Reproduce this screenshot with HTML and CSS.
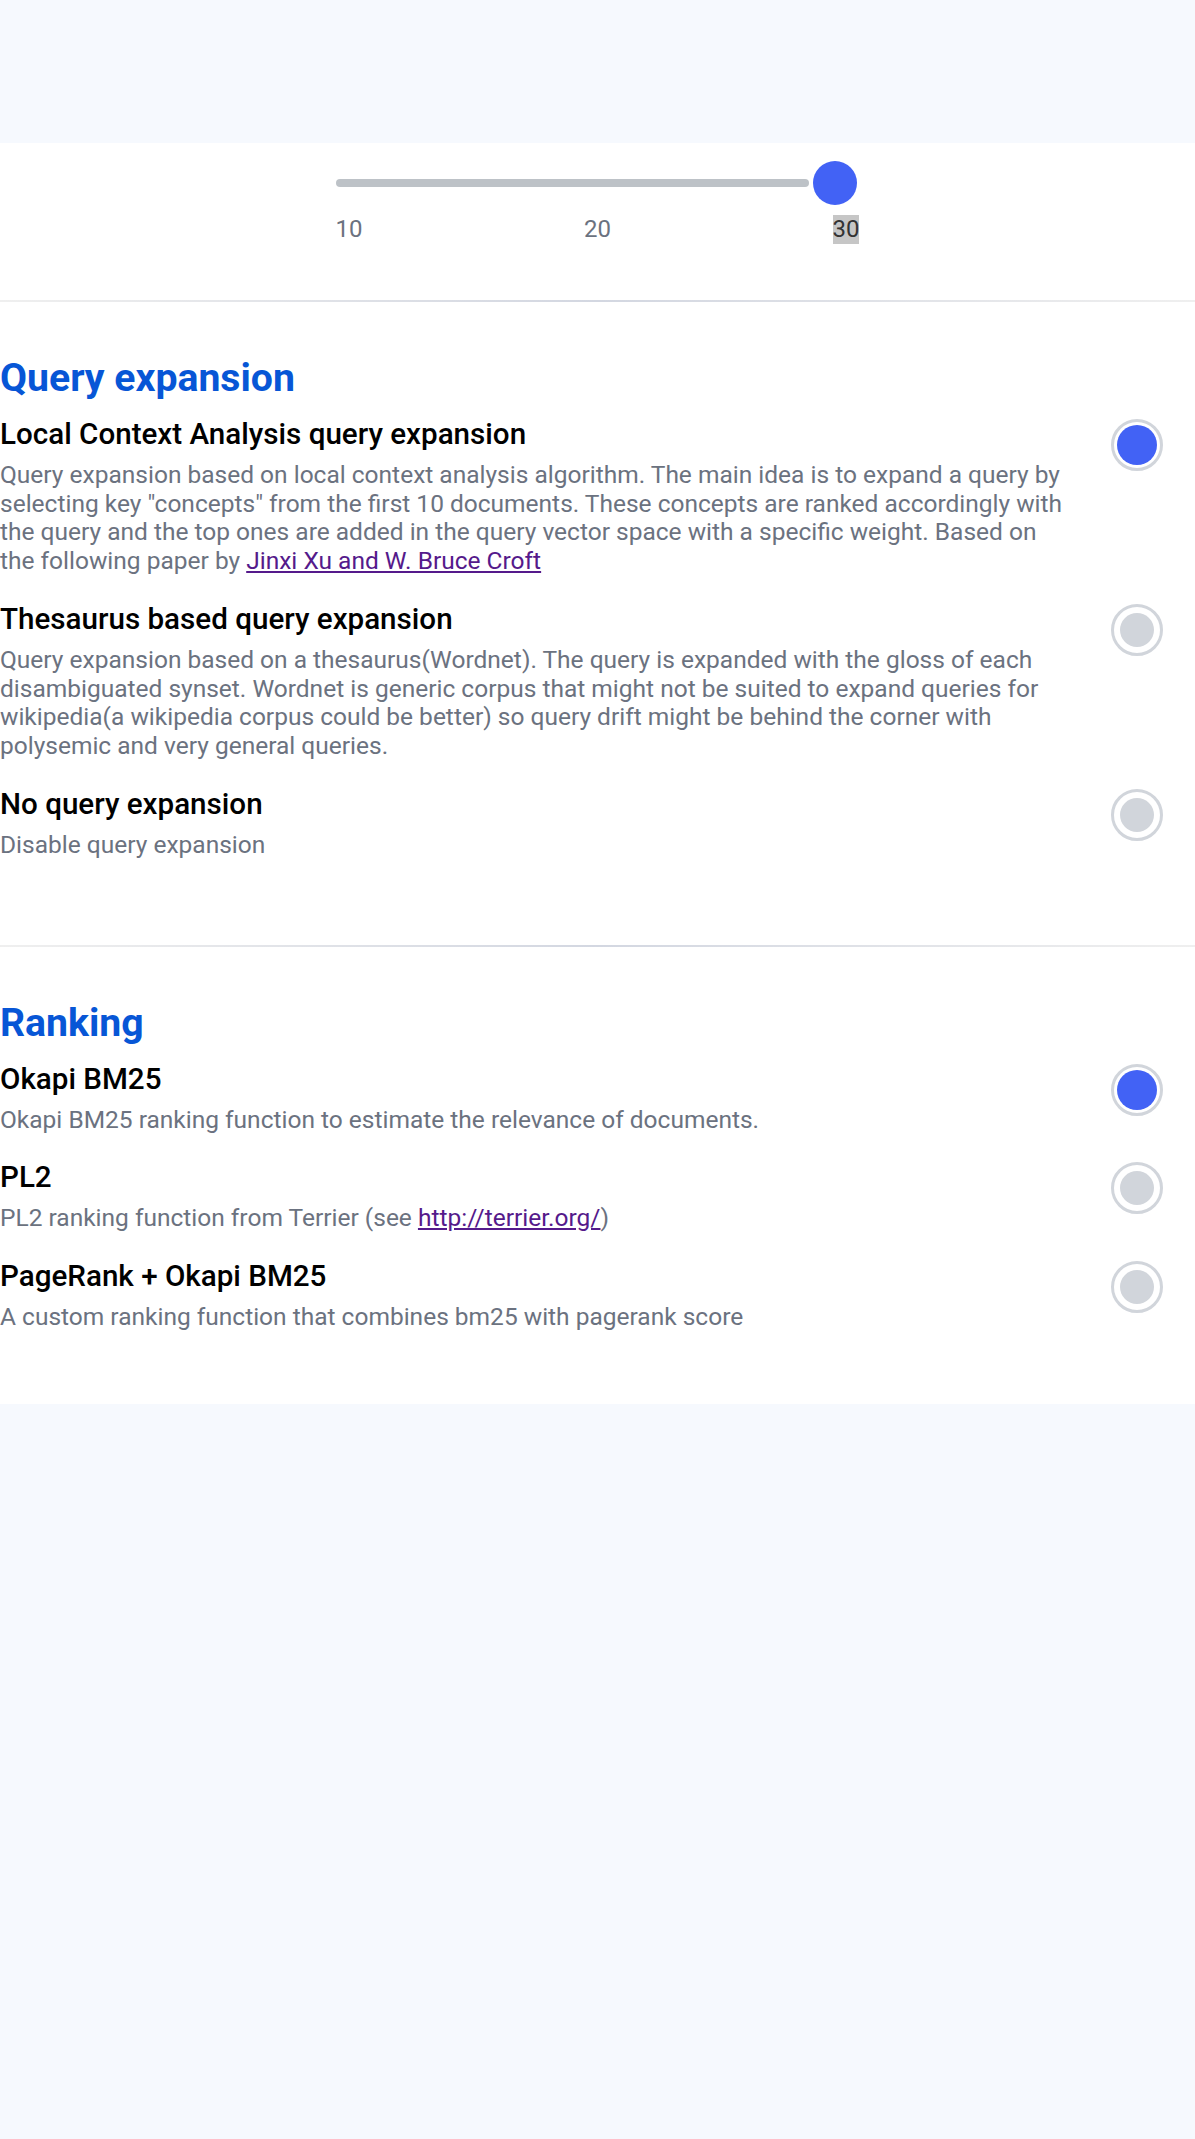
FILE: index.html
```html
<!DOCTYPE html>
<html lang="en">
<head>
<meta charset="utf-8">
<title>Search settings</title>
<link rel="stylesheet" href="styles.css">
</head>
<body>
<div class="top-band"></div>
<main class="panel">
  <section class="slider-section">
    <div class="slider">
      <div class="slider-rail">
        <div class="slider-track"></div>
        <div class="slider-thumb"></div>
      </div>
      <div class="slider-labels">
        <span class="slider-label">10</span>
        <span class="slider-label">20</span>
        <span class="slider-label is-current">30</span>
      </div>
    </div>
  </section>

  <hr class="divider">

  <section class="options">
    <h2 class="options-title">Query expansion</h2>
    <div class="option-list">
      <div class="option">
        <div class="option-text">
          <h3 class="option-name">Local Context Analysis query expansion</h3>
          <p class="option-desc">Query expansion based on local context analysis algorithm. The main idea is to expand a query by selecting key "concepts" from the first 10 documents. These concepts are ranked accordingly with the query and the top ones are added in the query vector space with a specific weight. Based on the following paper by <a class="option-link" href="#">Jinxi Xu and W. Bruce Croft</a></p>
        </div>
        <div class="radio is-on"><span class="radio-dot"></span></div>
      </div>
      <div class="option">
        <div class="option-text">
          <h3 class="option-name">Thesaurus based query expansion</h3>
          <p class="option-desc">Query expansion based on a thesaurus(Wordnet). The query is expanded with the gloss of each disambiguated synset. Wordnet is generic corpus that might not be suited to expand queries for wikipedia(a wikipedia corpus could be better) so query drift might be behind the corner with polysemic and very general queries.</p>
        </div>
        <div class="radio"><span class="radio-dot"></span></div>
      </div>
      <div class="option">
        <div class="option-text">
          <h3 class="option-name">No query expansion</h3>
          <p class="option-desc">Disable query expansion</p>
        </div>
        <div class="radio"><span class="radio-dot"></span></div>
      </div>
    </div>
  </section>

  <hr class="divider">

  <section class="options options-last">
    <h2 class="options-title">Ranking</h2>
    <div class="option-list">
      <div class="option">
        <div class="option-text">
          <h3 class="option-name">Okapi BM25</h3>
          <p class="option-desc">Okapi BM25 ranking function to estimate the relevance of documents.</p>
        </div>
        <div class="radio is-on"><span class="radio-dot"></span></div>
      </div>
      <div class="option">
        <div class="option-text">
          <h3 class="option-name">PL2</h3>
          <p class="option-desc">PL2 ranking function from Terrier (see <a class="option-link" href="#">http://terrier.org/</a>)</p>
        </div>
        <div class="radio"><span class="radio-dot"></span></div>
      </div>
      <div class="option">
        <div class="option-text">
          <h3 class="option-name">PageRank + Okapi BM25</h3>
          <p class="option-desc">A custom ranking function that combines bm25 with pagerank score</p>
        </div>
        <div class="radio"><span class="radio-dot"></span></div>
      </div>
    </div>
  </section>
</main>
</body>
</html>
```

FILE: styles.css
```css
* { box-sizing: border-box; }

html, body {
  margin: 0;
  padding: 0;
}

body {
  background: #f6f9fe;
  font-family: Roboto, "Liberation Sans", Arial, sans-serif;
  color: #000;
}

.top-band {
  height: 143px;
}

.panel {
  background: #ffffff;
  padding-bottom: 73px;
}

/* slider */
.slider-section {
  padding-top: 18px;
  padding-bottom: 56px;
}

.slider {
  width: 524px;
  margin: 0 auto;
}

.slider-rail {
  display: flex;
  align-items: center;
  height: 44px;
  padding-right: 3px;
}

.slider-track {
  flex: 1;
  height: 8px;
  border-radius: 4px;
  background: #bdc2c7;
}

.slider-thumb {
  width: 44px;
  height: 44px;
  margin-left: 4px;
  border-radius: 50%;
  background: #4262f5;
}

.slider-labels {
  display: flex;
  justify-content: space-between;
  margin-top: 10px;
}

.slider-label {
  font-size: 24px;
  line-height: 29px;
  color: #6b7280;
}

.slider-label.is-current {
  background: #c6c6c6;
  color: #333333;
}

/* divider */
.divider {
  margin: 0;
  border: 0;
  height: 2px;
  background: linear-gradient(to right, #efefef, #d3d7e1 50%, #efefef);
}

/* options */
.options {
  padding-top: 53px;
  padding-bottom: 85px;
}

.options-last {
  padding-bottom: 0;
}

.options-title {
  margin: 0;
  font-size: 39.2px;
  line-height: 46px;
  font-weight: 700;
  color: #0756d6;
}

.option-list {
  display: flex;
  flex-direction: column;
  gap: 27px;
  margin-top: 16px;
}

.options-last .option-list {
  gap: 26px;
}

.option {
  display: flex;
  align-items: flex-start;
  padding-right: 32px;
}

.option-text {
  flex: 1;
  min-width: 0;
}

.option-name {
  margin: 0 0 10px;
  font-size: 29.6px;
  line-height: 34px;
  font-weight: 500;
  color: #000;
}

.option-desc {
  margin: 0;
  font-size: 24.5px;
  line-height: 28.5px;
  color: #6b7280;
}

.option-link {
  color: #551a8b;
  text-decoration: underline;
}

.radio {
  flex: none;
  width: 52px;
  height: 52px;
  margin-top: 2px;
  margin-left: 40px;
  border: 3px solid #d1d5db;
  border-radius: 50%;
  display: flex;
  align-items: center;
  justify-content: center;
}

.radio-dot {
  width: 34px;
  height: 34px;
  border-radius: 50%;
  background: #d1d5db;
}

.radio.is-on .radio-dot {
  width: 40px;
  height: 40px;
  background: #4262f5;
}
```
